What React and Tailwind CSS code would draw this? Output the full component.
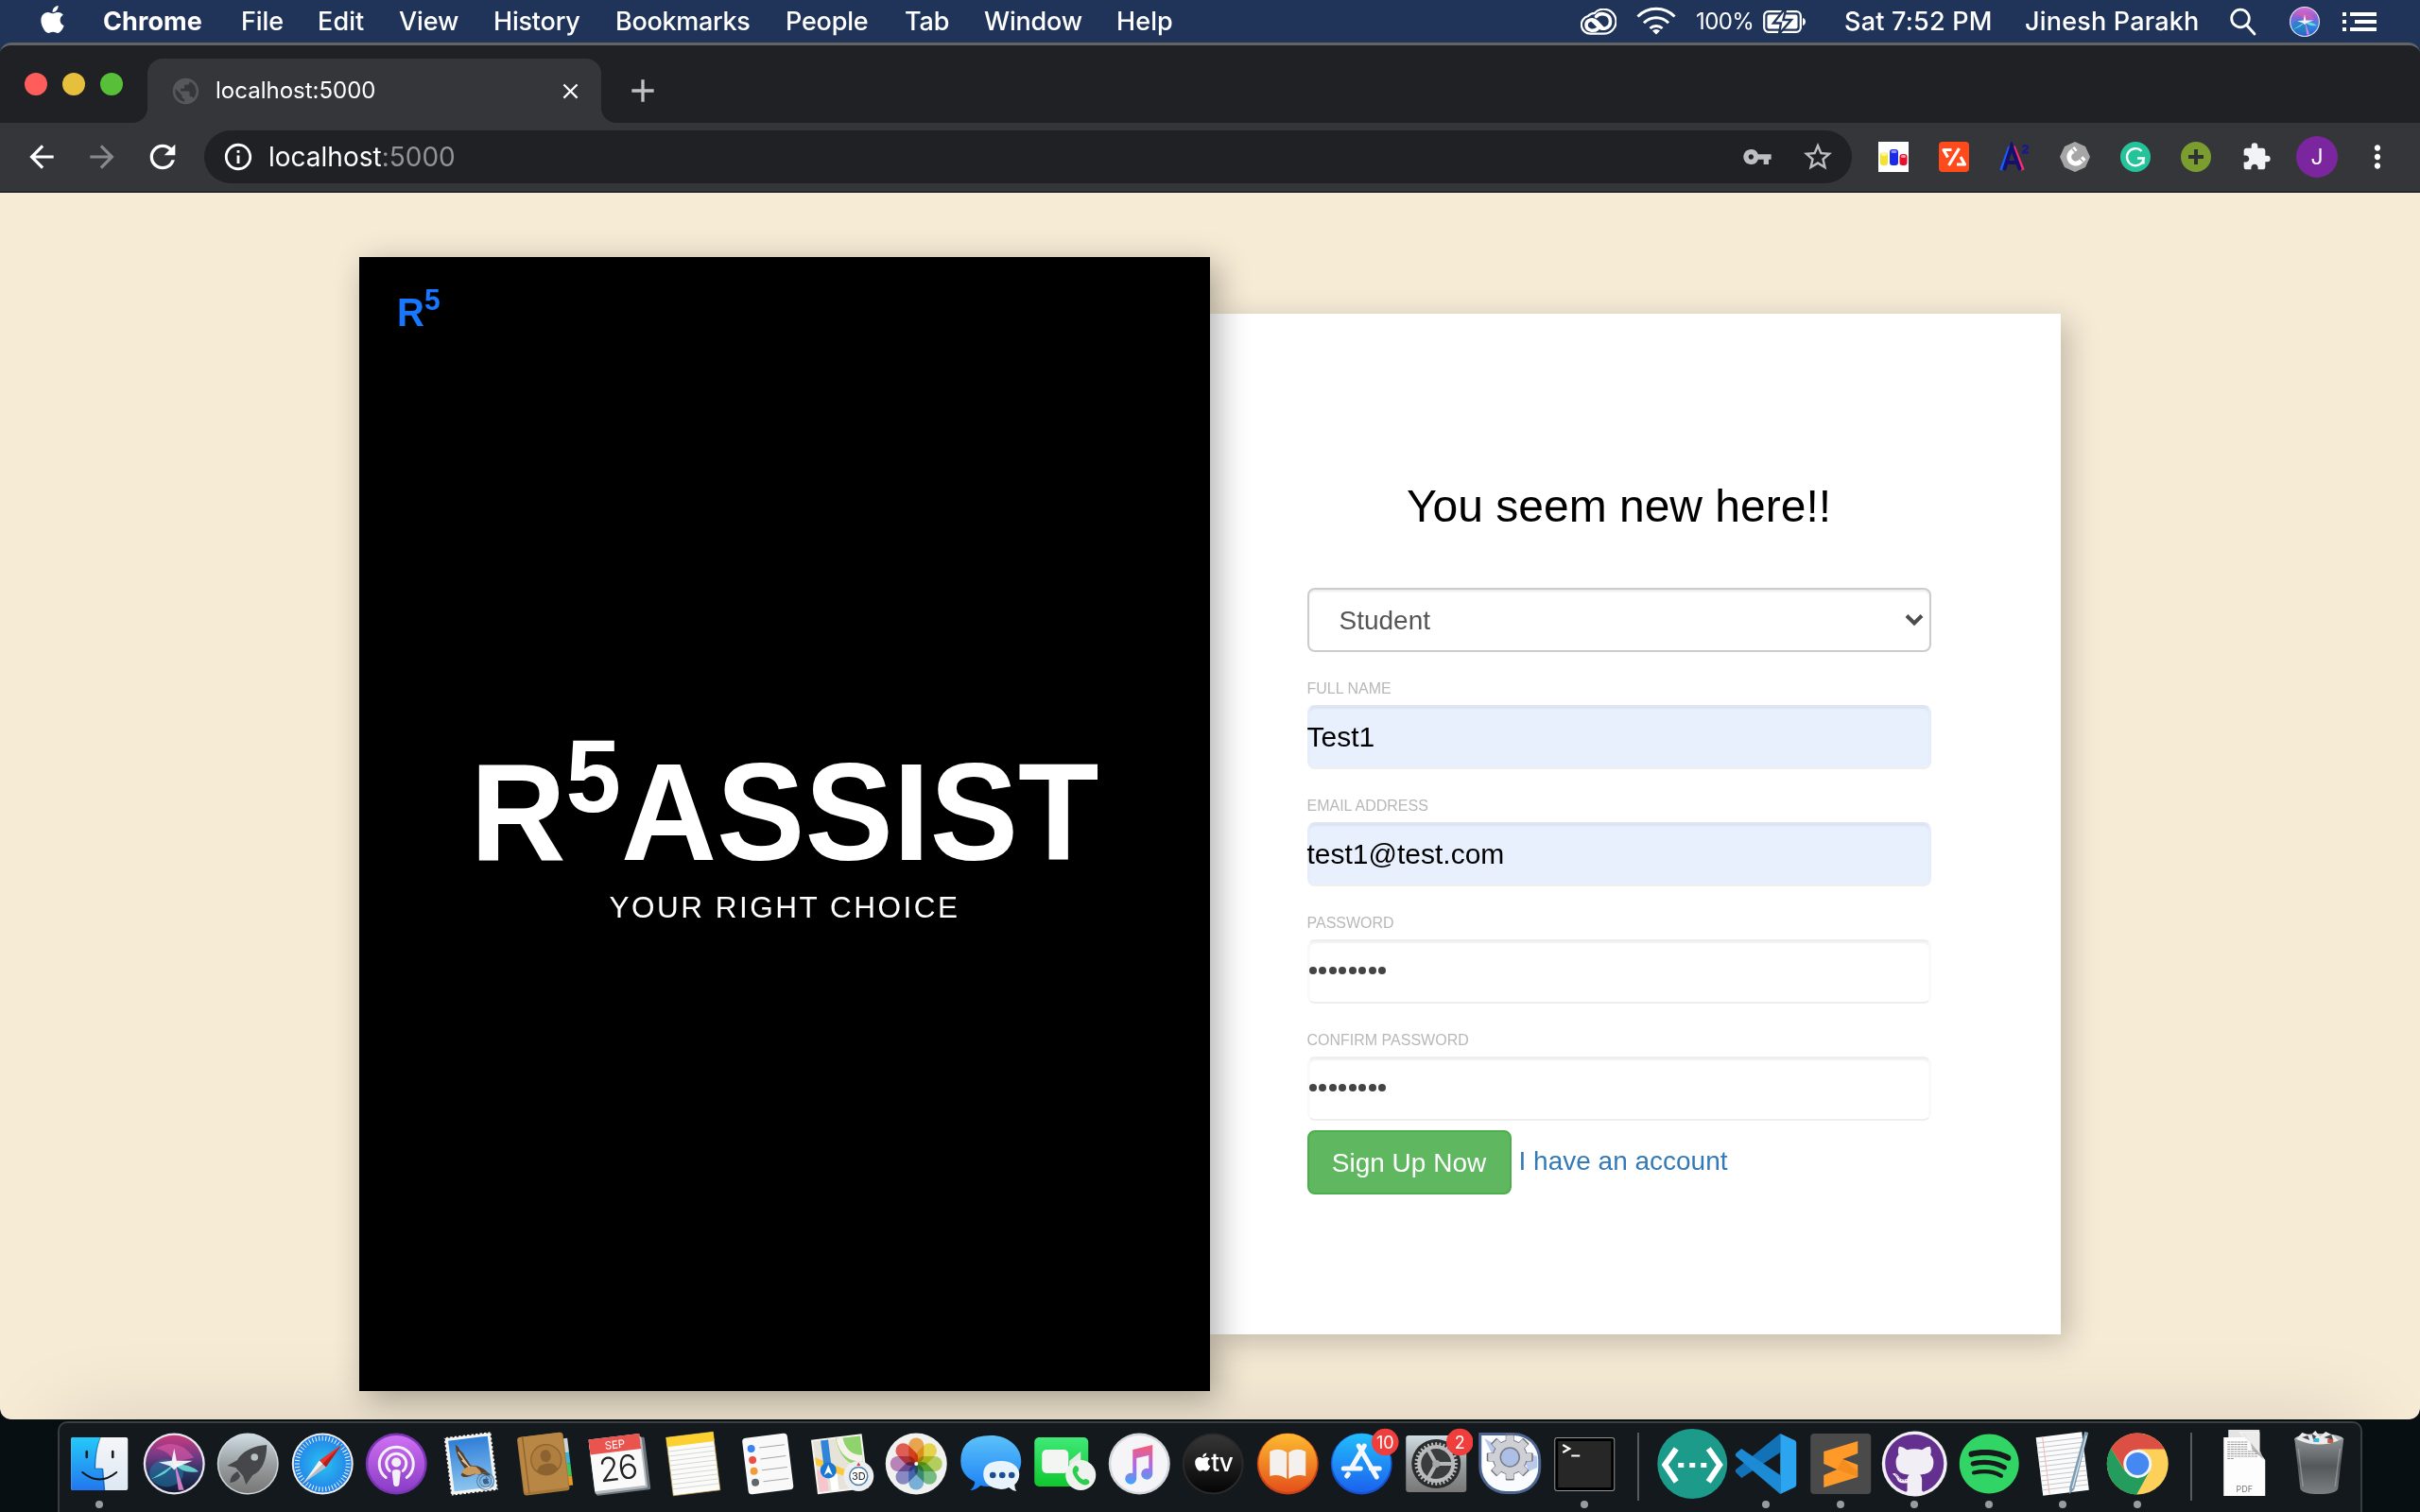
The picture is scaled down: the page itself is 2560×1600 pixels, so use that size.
import React from "react";
import {
  MdArrowBack, MdArrowForward, MdRefresh, MdInfoOutline, MdVpnKey, MdStarBorder,
  MdExtension, MdMoreVert, MdClose, MdAdd, MdPublic,
} from "react-icons/md";
import { FaApple, FaGithub, FaSpotify } from "react-icons/fa";

const menus = [
  ["Chrome", "w-[146px] font-bold tracking-[0.1px]"],
  ["File", "w-[81px] font-medium tracking-[-0.1px]"],
  ["Edit", "w-[86px] font-medium tracking-[0.1px]"],
  ["View", "w-[100px] font-medium tracking-[-0.1px]"],
  ["History", "w-[129px] font-medium tracking-[-0.2px]"],
  ["Bookmarks", "w-[180px] font-medium tracking-[-0.3px]"],
  ["People", "w-[126px] font-medium tracking-[-0.2px]"],
  ["Tab", "w-[84px] font-medium tracking-[-0.1px]"],
  ["Window", "w-[140px] font-medium tracking-[-0.2px]"],
  ["Help", "w-[80px] font-medium tracking-[0.1px]"],
];

function CreativeCloud() {
  return (
    <svg viewBox="0 0 38 28" className="h-7 w-[38px]" fill="none" stroke="#fff" strokeLinecap="round">
      <path d="M10.500 26.700a9.500 9.500 0 0 1-2.500-18.700A9.500 9.500 0 0 1 15 4.800 13 13 0 1 1 25 26.700z" strokeWidth="2.200" />
      <path d="M18 21.500c-4.500 3.500-12 1.500-12-4s7-7.500 11-3.500l6.500 7" strokeWidth="3.600" />
      <path d="M16.500 8.500c4.500-5 15-3 15 5s-8.500 10-13 5l-6-6" strokeWidth="3.600" />
    </svg>
  );
}

function Wifi() {
  return (
    <svg viewBox="0 0 42 30" className="h-[30px] w-[42px]" fill="none" stroke="#fff" strokeWidth="3">
      <path d="M1.500 10.500a27 27 0 0 1 39 0M8 17.200a18 18 0 0 1 26 0M14.500 23a9.500 9.500 0 0 1 13 0" />
      <path d="M21 29.500l-4-4a6 6 0 0 1 8 0z" fill="#fff" stroke="none" />
    </svg>
  );
}

function Battery() {
  return (
    <svg viewBox="0 0 46 26" className="h-[26px] w-[46px]">
      <rect x="1.200" y="2.200" width="38.600" height="21.600" rx="4.500" fill="none" stroke="#fff" strokeWidth="2.200" />
      <rect x="4.500" y="5.500" width="32" height="15" rx="2" fill="#fff" />
      <path d="M42 9v8c4-1 4-7 0-8z" fill="#fff" />
      <path d="M22.500 0L11 14.500h8L17 26l13-15h-8.500L24 0z" fill="#fff" stroke="#203459" strokeWidth="2.400" />
    </svg>
  );
}

function SiriMark({ r = 16, fill = "url(#siri)" }) {
  return (
    <g>
      <circle r={r} fill="#e9e6ee" />
      <circle r={r * 0.93} fill={fill} />
      <ellipse cx={-r * 0.25} cy={r * 0.3} rx={r * 0.55} ry={r * 0.45} fill="#1f7fb0" opacity=".5" />
      <path d={`M${-r * 0.6} ${-r * 0.5}Q${r * 0.1} ${-r * 0.9} ${r * 0.65} ${-r * 0.2}Q${r * 0.1} ${-r * 0.1} 0 0Q${-r * 0.1} ${-r * 0.4} ${-r * 0.6} ${-r * 0.5}`} fill="#e25aa8" opacity=".6" />
      <path d={`M${-r * 0.75} ${r * 0.5}Q${-r * 0.1} ${r * 0.1} 0 0Q${r * 0.5} 0 ${r * 0.8} ${r * 0.25}Q${r * 0.3} ${r * 0.35} 0 0Q${-r * 0.2} ${r * 0.35} ${-r * 0.75} ${r * 0.5}`} fill="#6fe9dc" opacity=".85" />
      <path d={`M0 ${-r * 0.1}L${r * 0.32} ${r * 0.85}L${r * 0.14} ${r * 0.85}Z`} fill="#f08ad8" opacity=".85" />
      <path d={`M0 ${-r * 0.5}L${r * 0.08} ${-r * 0.1}L${r * 0.6} ${-r * 0.1}L${r * 0.1} ${r * 0.1}L0 ${r * 0.2}L${-r * 0.12} ${r * 0.08}L${-r * 0.5} ${-r * 0.05}L${-r * 0.08} ${-r * 0.1}Z`} fill="#fff" opacity=".9" />
    </g>
  );
}

function MenuBar() {
  return (
    <header className="flex h-[45px] items-center bg-[#203459] text-[27px] leading-none text-white">
      <div className="w-[109px] pb-1 pl-[39px]"><FaApple size={33} /></div>
      <nav className="flex flex-1 whitespace-nowrap">
        {menus.map(([m, c]) => <span key={m} className={c}>{m}</span>)}
      </nav>
      <div className="flex items-center whitespace-nowrap">
        <div className="w-[59px]"><CreativeCloud /></div>
        <div className="w-[63px] pb-0.5"><Wifi /></div>
        <span className="w-[71px] text-[24px] tracking-[-0.6px]">100%</span>
        <div className="w-[86px]"><Battery /></div>
        <span className="w-[191px] font-medium tracking-[0.2px]">Sat 7:52 PM</span>
        <span className="w-[217px] font-medium tracking-[0.2px]">Jinesh Parakh</span>
        <svg viewBox="0 0 28 30" className="mr-[35px] h-[30px] w-7" fill="none" stroke="#fff" strokeWidth="2.800">
          <circle cx="11" cy="11.500" r="9.300" /><path d="M17.500 18.500L26 28" strokeLinecap="round" />
        </svg>
        <svg viewBox="-16 -16 32 32" className="mr-6 size-8"><SiriMark r={16} fill="url(#siriBright)" /></svg>
        <svg viewBox="0 0 36 20" className="mr-[46px] h-5 w-9" fill="#fff">
          <path d="M0 0h4v4H0zM0 8h4v4H0zM0 16h4v4H0zM8 0h28v4H8zM13 8h23v4H13zM8 16h28v4H8z" />
        </svg>
      </div>
    </header>
  );
}

function TabStrip() {
  return (
    <div className="flex h-[82px] items-end bg-[#202124]">
      <div className="flex w-[140px] gap-4 pb-[29px] pl-[26px]">
        <i className="size-6 rounded-full bg-[#ff5d5b]" />
        <i className="size-6 rounded-full bg-[#e6bf3c]" />
        <i className="size-6 rounded-full bg-[#57c038]" />
      </div>
      <div className="flex items-end">
        <div className="size-4 bg-[#35363a]"><div className="size-4 rounded-br-2xl bg-[#202124]" /></div>
        <div className="flex h-[68px] w-[480px] items-center rounded-t-2xl bg-[#35363a] pl-6 pr-[19px] text-[24px] text-white">
          <MdPublic size={33} className="text-[#54575b]" />
          <span className="ml-[15px] flex-1 tracking-[0px]">localhost:5000</span>
          <MdClose size={27} />
        </div>
        <div className="size-4 bg-[#35363a]"><div className="size-4 rounded-bl-2xl bg-[#202124]" /></div>
      </div>
      <MdAdd size={40} className="mb-[14px] ml-[8px] text-[#bdc1c6]" />
    </div>
  );
}

function Extensions() {
  return (
    <div className="flex items-center gap-8">
      <svg viewBox="0 0 32 32" className="size-8">
        <path d="M0 0h32v32H0z" fill="#fff" />
        <rect x="2" y="11" width="8" height="14" rx="3" fill="#f4e32c" /><rect x="3" y="11" width="6" height="4" rx="2" fill="#fff8a0" />
        <rect x="12" y="8" width="9" height="17" rx="3" fill="#1a2be8" /><rect x="13.500" y="9" width="6" height="3" rx="1.500" fill="#8a93ff" />
        <rect x="22.500" y="13" width="8" height="12" rx="3" fill="#e8112d" /><rect x="24" y="14" width="5" height="3" rx="1.500" fill="#ff9aa5" />
      </svg>
      <svg viewBox="0 0 32 32" className="size-8">
        <rect width="32" height="32" rx="4" fill="#ff4a1c" />
        <path d="M13.500 8.500H5l4.500 8M21.500 7L10.500 25M19 24h8.500L23 16" fill="none" stroke="#fff" strokeWidth="3.200" strokeLinejoin="round" />
      </svg>
      <svg viewBox="0 0 32 32" className="size-8" fill="none">
        <path d="M2 30L11 5" stroke="#1a5cff" strokeWidth="3.500" />
        <path d="M15 5l10 25" stroke="#ff2d6f" strokeWidth="3.500" />
        <path d="M5 30L13 5 22 30M8 22h11" stroke="#14106b" strokeWidth="4" />
        <path d="M25 6c0-2.500 5-2.500 5 0 0 2-5 3-5 5.500h6" stroke="#1a1a8a" strokeWidth="2.400" />
      </svg>
      <svg viewBox="0 0 32 32" className="size-8">
        <path d="M16 0l11 5 5 11-5 11-11 5-11-5L0 16 5 5z" fill="#a6a6a6" strokeLinejoin="round" />
        <path d="M17 7l-5.500 4.500a7 7 0 0 0 9 10.500L26 17" fill="none" stroke="#fff" strokeWidth="5" />
        <path d="M13 7.500l4 4.500M20.500 17l4 4" stroke="#a6a6a6" strokeWidth="1.500" />
      </svg>
      <svg viewBox="0 0 32 32" className="size-8">
        <circle cx="16" cy="16" r="16" fill="#25c39a" />
        <path d="M22.500 10a9 9 0 1 0 2.400 7.500H18M24.500 17v6.500" fill="none" stroke="#fff" strokeWidth="2.300" />
      </svg>
      <svg viewBox="0 0 32 32" className="size-8">
        <circle cx="16" cy="16" r="16" fill="#7b9c2e" />
        <path d="M16 8v16M8 16h16" stroke="#2f3135" strokeWidth="4" />
      </svg>
      <MdExtension size={32} className="text-[#f1f3f4]" />
      <div className="-ml-[6px] flex size-11 items-center justify-center rounded-full bg-[#7b269f] text-[23px] text-white">J</div>
    </div>
  );
}

function Toolbar() {
  return (
    <div className="flex h-[74px] items-center border-b-2 border-[#26272a] bg-[#35363a] text-white">
      <MdArrowBack size={38} className="ml-[25px]" />
      <MdArrowForward size={38} className="ml-[26px] text-[#88898c]" />
      <MdRefresh size={40} className="ml-[25px]" />
      <div className="ml-[24px] flex h-14 w-[1743px] items-center rounded-full bg-[#202124] pl-[19px] text-[28px]">
        <MdInfoOutline size={34} />
        <span className="ml-[15px] flex-1 tracking-[0px]">localhost<span className="text-[#919395]">:5000</span></span>
        <MdVpnKey size={32} className="text-[#bdbebf]" />
        <MdStarBorder size={36} className="ml-[30px] mr-[18px] text-[#bdbebf]" />
      </div>
      <div className="ml-7"><Extensions /></div>
      <MdMoreVert size={38} className="ml-[23px]" />
    </div>
  );
}

const fieldBase = "flex h-[68px] items-center rounded-lg border-2 text-[30px] shadow-[inset_0_2px_2px_rgba(0,0,0,0.06)]";

function Field({ label, value, secret }) {
  return (
    <div>
      <div className="flex h-14 items-end pb-[8px] text-[16px] leading-[18px] tracking-[0px] text-[#b8b8b8]">{label}</div>
      {secret ? (
        <div className={fieldBase + " gap-[2.500px] border-x-[#f9f9f9] border-y-[#eee] bg-white pb-[3px]"}>
          {Array.from({ length: 8 }, (_, i) => <i key={i} className="size-2 rounded-full bg-[#444]" />)}
        </div>
      ) : (
        <div className={fieldBase + " border-[#e6eefb] border-b-[#eee] border-t-[#dfe6f2] bg-[#e8f0fe] pb-[2px] text-black"}>
          <span className="-ml-[2px]">{value}</span>
        </div>
      )}
    </div>
  );
}

function Page() {
  return (
    <main className="flex h-[1298px] items-start rounded-b-[10px] bg-[#f6ebd5] pl-[380px] pt-[68px] font-['Liberation_Sans',Arial,sans-serif]">
      <section className="relative flex h-[1200px] w-[900px] flex-col items-center bg-black text-white shadow-[8px_8px_32px_rgba(0,0,0,0.32)]">
        <div className="flex h-[520px] w-full origin-[0_72px] scale-y-[1.05] items-start pl-10 pt-[30px] text-[40px] font-bold leading-[58px] text-[#1877ff]">
          R<span className="-mt-[12px] text-[30px]">5</span>
        </div>
        <div className="flex h-[140px] origin-[50%_118px] scale-y-[1.05] items-start text-[140px] font-bold leading-[140px]">
          R<span className="-mt-[37px] text-[105px]">5</span>ASSIST
        </div>
        <div className="mt-2 text-[31.500px] leading-[40px] tracking-[2.500px]">YOUR RIGHT CHOICE</div>
      </section>
      <section className="mt-[60px] h-[1080px] w-[900px] bg-white pl-[102.500px] pt-[178px] shadow-[8px_8px_30px_rgba(0,0,0,0.22)]">
        <div className="w-[660px]">
          <h1 className="h-[112px] pt-px text-center text-[48px] leading-[50px] text-black">You seem new here!!</h1>
          <div className="flex h-[68px] items-center justify-between rounded-lg border-2 border-[#ccc] bg-white pl-8 pr-[6px] text-[28px] text-[#555] shadow-[inset_0_2px_2px_rgba(0,0,0,0.075)]">
            <span className="pt-px">Student</span>
            <svg viewBox="0 0 20 14" className="h-[14px] w-5" fill="none" stroke="#4c4c4c" strokeWidth="4"><path d="M2 2.500l8 8 8-8" /></svg>
          </div>
          <Field label="FULL NAME" value="Test1" />
          <Field label="EMAIL ADDRESS" value="test1@test.com" />
          <Field label="PASSWORD" secret />
          <Field label="CONFIRM PASSWORD" secret />
          <div className="mt-[10px] flex items-center gap-[8px] text-[28px]">
            <button className="h-[68px] w-[216px] rounded-lg border-2 border-[#4cae4c] bg-[#5fb760] pt-px text-white">Sign Up Now</button>
            <a className="pb-[2px] text-[#337ab7]">I have an account</a>
          </div>
        </div>
      </section>
    </main>
  );
}

/* Dock artwork: every icon is drawn around the origin. */
const petals = ["#f5a13a", "#f0dc35", "#b5d34b", "#67bd77", "#6aaede", "#7f7fc6", "#b978b8", "#e8493f"];
const ticks = Array.from({ length: 48 }, (_, i) => i * 7.5);

function Gear({ teeth, r, h, w, fill }) {
  return (
    <g fill={fill}>
      <circle r={r} />
      {Array.from({ length: teeth }, (_, i) => (
        <rect key={i} x={-w / 2} y={-r - h} width={w} height={h + 4} rx="1" transform={`rotate(${(360 / teeth) * i})`} />
      ))}
    </g>
  );
}

function AppBadge({ n }) {
  return (
    <g>
      <circle cx="25" cy="-23" r="14.300" fill="#f03e3d" />
      <text x="25" y="-16.500" textAnchor="middle" fontSize="18" fill="#fff">{n}</text>
    </g>
  );
}

const art = {
  finder: (
    <g>
      <rect x="-30" y="-28" width="60" height="56" rx="2" fill="url(#finderR)" />
      <path d="M1-28h-29a2 2 0 0 0-2 2v52a2 2 0 0 0 2 2H6Q5 17 4 5h-8Q-4-14 1-28z" fill="url(#finderL)" />
      <path d="M1-28Q-5-14-5 5h8q1 12 2 23" fill="none" stroke="#143a66" strokeWidth="1" opacity=".5" />
      <path d="M-13.500-13v6M14-13v6" stroke="#1a1a1a" strokeWidth="2.600" strokeLinecap="round" />
      <path d="M-18 9q18 15 36 0" fill="none" stroke="#151515" strokeWidth="2" strokeLinecap="round" />
    </g>
  ),
  siri: <SiriMark r={32.500} />,
  launch: (
    <g>
      <circle r="32.500" fill="#cfd8dd" /><circle r="31" fill="url(#steel)" />
      <path d="M20-20C4-19-7-12-11-4l-11 6 9 2 8 9 3 9 7-10C15 8 20-5 20-20z" fill="#45474a" />
      <circle cx="7" cy="-7" r="3.800" fill="#b7c0c5" />
      <path d="M-11 8q-8 4-8 12 8-1 11-7z" fill="#45474a" />
    </g>
  ),
  safari: (
    <g>
      <circle r="32.500" fill="#eee" /><circle r="30.500" fill="url(#safari)" />
      {ticks.map((a) => <path key={a} d="M0-29.500v5" stroke="#fff" strokeWidth=".9" transform={`rotate(${a})`} />)}
      <path d="M20-20L-3.500-3.500 3.500 3.500z" fill="#e8362f" /><path d="M-20 20L-3.500-3.500 3.500 3.500z" fill="#f2f2f2" />
      <path d="M-20 20L0 0l3.500 3.500z" fill="#b9bcc0" /><path d="M20-20L0 0l3.500 3.500z" fill="#b51d1d" />
    </g>
  ),
  podcasts: (
    <g>
      <circle r="32.500" fill="#7a35b5" /><circle r="30" fill="url(#pod)" />
      <path d="M-11 14.500a18 18 0 1 1 22 0M-7 7.500a10.500 10.500 0 1 1 14 0" fill="none" stroke="#f4f0f8" strokeWidth="3" strokeLinecap="round" />
      <circle cy="-1.500" r="5" fill="#f4f0f8" /><path d="M-4.500 9q0-3 4.500-3t4.500 3l-1.500 13q-.5 2-3 2t-3-2z" fill="#f4f0f8" />
    </g>
  ),
  mail: (
    <g transform="rotate(-7)">
      <rect x="-25" y="-31" width="50" height="62" fill="#f3f3f0" />
      <rect x="-25" y="-31" width="50" height="62" fill="none" stroke="#12181c" strokeWidth="2" strokeDasharray="2 2.500" />
      <rect x="-21" y="-27" width="42" height="54" fill="url(#sky)" />
      <path d="M-14-22q3 2 4 6 4 4 5 9 3 4 4 8 3 2 7 2 9 4 13 12-6-1-8-3-3 2-7-1l-7 2q-8 1-9-3 2-3 6-4-9-13-8-28z" fill="#5a4028" />
      <path d="M-11 7q7-7 16-3 4 4 5 8-4 1-7-1l-6 1q-6-1-8-5z" fill="#c79a5f" /><path d="M-12-14l9 16M-9-5l7 8" stroke="#d9c6a4" strokeWidth="1.500" />
      <circle cx="13" cy="20" r="9" fill="none" stroke="#4c6b8c" strokeWidth="1" opacity=".8" />
      <circle cx="13" cy="20" r="6" fill="none" stroke="#4c6b8c" strokeWidth="1" opacity=".8" />
      <FaApple x="9" y="15" size="9" color="#3f5f82" />
    </g>
  ),
  contacts: (
    <g transform="translate(-1 0) rotate(-7)">
      <path d="M22-24h6v15h-6z" fill="#cdd5d8" /><path d="M22-9h6V3h-6z" fill="#3fb3d6" /><path d="M22 3h6v13h-6z" fill="#43c35c" /><path d="M22 16h6v10h-6z" fill="#e59a26" />
      <rect x="-25" y="-31" width="49" height="62" rx="3" fill="#a67738" /><rect x="-24" y="-31" width="47" height="59" rx="3" fill="#b88746" />
      <path d="M-19-31v61" stroke="#94662c" strokeWidth="1.500" />
      <circle cx="3" cy="-4" r="16" fill="#b07e3e" stroke="#8f642f" strokeWidth="1.400" />
      <ellipse cx="3" cy="-8" rx="5.500" ry="6.500" fill="#8c6230" /><path d="M-8 7q2-7 11-7t11 7q-5 5-11 5t-11-5z" fill="#8c6230" />
    </g>
  ),
  calendar: (
    <g transform="translate(-1.500 -1) rotate(-7)">
      <rect x="-27" y="-24" width="58" height="56" rx="2" fill="#6e777c" /><rect x="-28" y="-25" width="56" height="55" rx="2" fill="#b5bbbf" />
      <rect x="-28" y="-28" width="54" height="55" fill="#fafafa" /><rect x="-28" y="-28" width="54" height="16" fill="#e9544f" />
      <text x="-1" y="-15.500" textAnchor="middle" fontSize="11.500" fill="#fff">SEP</text>
      <text x="-1" y="18" textAnchor="middle" fontSize="35" fill="#222" letterSpacing="-1.500" fontWeight="300">26</text>
    </g>
  ),
  notes: (
    <g transform="rotate(-7)">
      <rect x="-25" y="-31" width="50" height="62" fill="#fbfbf9" stroke="#c6a24a" strokeWidth=".7" />
      <rect x="-25" y="-31" width="50" height="10" fill="#fcd02f" />
      {Array.from({ length: 9 }, (_, i) => <path key={i} d={`M-25 ${-16 + i * 5}h50`} stroke="#cfcfcf" strokeWidth=".8" />)}
    </g>
  ),
  reminders: (
    <g transform="rotate(-7)">
      <rect x="-24" y="-30" width="48" height="60" rx="4" fill="#f9f9fa" />
      {["#3b82f2", "#ec5045", "#f39b38", "#5f656d"].map((c, i) => (
        <g key={c}><circle cx="-15.500" cy={-18 + i * 12} r="4" fill={c} /><path d={`M-7 ${-18 + i * 12}h27`} stroke="#a5a7aa" strokeWidth="1" /></g>
      ))}
    </g>
  ),
  maps: (
    <g>
      <g transform="rotate(-7)">
        <rect x="-29" y="-29" width="54" height="58" fill="#f7f5ef" /><rect x="-27" y="-27" width="50" height="54" fill="#e8e3d8" />
        <path d="M-3-27h26V5Q0 3-3-27z" fill="#8fd36d" /><path d="M1-27q2 22 22 24" fill="none" stroke="#f5f2ea" strokeWidth="7" />
        <path d="M-27-10l22 12L23 18v6l-30-15-20-11z" fill="#fdc93c" /><path d="M-27 3l10 5v19h-10z" fill="#f6c6cf" />
        <path d="M-19-27h8v34h-8z" fill="#2f86d8" /><path d="M-14 10h8v17h-8z" fill="#fff" />
      </g>
      <circle cx="-14" cy="7" r="8.500" fill="#1a77d3" /><path d="M-14 1l4.500 11-4.500-3-4.500 3z" fill="#fff" />
      <circle cx="18" cy="13" r="16" fill="#eceff1" /><circle cx="18" cy="13" r="9.500" fill="#fff" stroke="#4b7ea3" strokeWidth="1.500" />
      <text x="18" y="17" textAnchor="middle" fontSize="11" fill="#222">3D</text><path d="M18-1.500l2 3.500h-4z" fill="#e33" />
    </g>
  ),
  photos: (
    <g>
      <circle r="32.500" fill="#f1f1f0" />
      {petals.map((c, i) => <rect key={c} x="-8" y="-27.500" width="16" height="27" rx="8" fill={c} opacity=".86" style={{ mixBlendMode: "multiply" }} transform={`rotate(${i * 45})`} />)}
      <circle r="2" fill="#fff" />
    </g>
  ),
  messages: (
    <g>
      <path d="M0-30c18 0 32 12 32 27S18 24-2 24q-6 0-9-1-5 5-11 5 5-4 5-9-15-7-15-22 0-27 32-27z" fill="url(#msg)" />
      <path d="M11-3c11 0 19 6 19 14q0 7-5 11 0 4 2 7-5-1-8-4-4 2-8 2-19-2-19-16T11-3z" fill="#e9f3fb" />
      <g fill="#1c4f8f"><circle cx="2" cy="12" r="3.300" /><circle cx="12" cy="12" r="3.300" /><circle cx="22" cy="12" r="3.300" /></g>
    </g>
  ),
  facetime: (
    <g>
      <rect x="-32" y="-28" width="57" height="52" rx="5" fill="url(#ft)" />
      <rect x="-24" y="-15" width="28" height="25" rx="5" fill="#f3f5f3" /><path d="M5-3L17-13V10H5z" fill="#e4ebe5" />
      <circle cx="17" cy="12" r="16" fill="#f0f2ef" />
      <path d="M10 3q3-3 5 2 0 3-2 4 2 6 7 8 2-2 5 0 3 3-1 5-6 2-12-6T10 3z" fill="#2bcf4c" />
    </g>
  ),
  music: (
    <g>
      <circle r="32.500" fill="#d3d7dd" /><circle r="30" fill="#f5f5f8" />
      <path d="M-7-15L14-20v31a6 6 0 1 1-4-6V-9L-3-6v22a6 6 0 1 1-4-6z" fill="url(#music)" />
    </g>
  ),
  tv: (
    <g>
      <circle r="32.500" fill="#2a2a2b" /><circle r="30.500" fill="url(#tv)" />
      <FaApple x="-22" y="-13" size="22" color="#fff" />
      <text x="-2" y="8" fontSize="26" fontWeight="500" fill="#fff" letterSpacing="-1">tv</text>
    </g>
  ),
  books: (
    <g>
      <circle r="32.500" fill="#c94316" /><circle r="31" cy="-1" fill="url(#books)" />
      <path d="M-1-12q-8-6-18-1v26q10-3 18 3zM1-12q8-6 18-1v26q-10-3-18 3z" fill="#f3f0ee" />
    </g>
  ),
  appstore: (
    <g>
      <circle r="32.500" fill="#1652d2" /><circle r="31" cy="-1" fill="url(#store)" />
      <g stroke="#f4f8fc" strokeWidth="5" strokeLinecap="round" fill="none"><path d="M3-19L-11 5M-3-19L16 14M-19 5H-1M10 5h9M-14 11l-1.500 2" /></g>
      <AppBadge n="10" />
    </g>
  ),
  settings: (
    <g>
      <rect x="-32" y="-30" width="64" height="60" rx="3" fill="url(#steel)" />
      <circle r="26" fill="#2b2c2e" />
      <Gear teeth={32} r={20} h={3} w={2} fill="#b9bbbd" /><circle r="16" fill="#3b3c3e" />
      <g stroke="#b4b6b8" strokeWidth="4"><path d="M0 0L17 0M0 0L-9-16M0 0L-9 16" /></g><circle r="4" fill="#a5a7a9" />
      <AppBadge n="2" />
    </g>
  ),
  config: (
    <g>
      <path d="M-33-33H4A29 29 0 0 1 33-4V4A28 28 0 0 1 5 32H-4A29 29 0 0 1-33 3z" fill="#4a648f" />
      <path d="M-30-30H4A26 26 0 0 1 30-4V4A25 25 0 0 1 5 29H-4A26 26 0 0 1-30 3z" fill="#fafbfe" />
      <path d="M-29-26L-6-6-24 18A26 26 0 0 1-29 3z" fill="#fff" /><path d="M-27-27L-8-16-14 0zM12-12l17 4V4l-9 4z" fill="#b9c9ea" />
      <g transform="translate(0 -7)"><Gear teeth={8} r={18.500} h={6} w={9} fill="#70727c" /><Gear teeth={8} r={17.500} h={5.500} w={8} fill="#cfd0d6" /><circle r="10" fill="#aebfe6" stroke="#777b88" strokeWidth="1.500" /></g>
    </g>
  ),
  terminal: (
    <g>
      <rect x="-32" y="-28" width="64" height="57" rx="3" fill="#8f9496" /><rect x="-31" y="-27" width="62" height="55" rx="2" fill="#000" />
      <rect x="-28" y="-24" width="56" height="49" fill="#272727" />
      <path d="M-23-20l7 4-7 4" stroke="#fff" strokeWidth="2.200" fill="none" /><path d="M-14-8.500h9" stroke="#fff" strokeWidth="2" />
    </g>
  ),
  brackets: (
    <g>
      <circle r="37" fill="#1c9b8b" />
      <path d="M-17-16L-29 1l12 18M17-16L29 1 17 19" fill="none" stroke="#fff" strokeWidth="6" />
      <path d="M-15-1h6v5h-6zM-3-1h6v5h-6zM9-1h6v5H9z" fill="#fff" />
    </g>
  ),
  vscode: (
    <g>
      <path d="M15-32v20L-26 15l-6-6q-1-1 0-3z" fill="#1272b8" />
      <path d="M-26-16l-6 5q-1 2 0 3L15 32V12z" fill="#1c8ad4" />
      <path d="M15-32l15 7q2 1 2 3v44q0 2-2 3l-15 7z" fill="#2ba5f0" />
    </g>
  ),
  sublime: (
    <g>
      <rect x="-32" y="-32" width="64" height="64" rx="4" fill="#4a4a4a" />
      <path d="M-18-13L18-24v13L2-5l16 6V14L-18 25V12L-4 6l-14-6z" fill="#ff9a28" /><path d="M-4 6L18 14V8L2-5z" fill="#e58013" opacity=".5" />
    </g>
  ),
  github: <g><circle r="34.500" fill="#f2eef5" /><FaGithub x="-32" y="-32" size="64" color="#63308f" /></g>,
  spotify: <g><circle r="31" fill="#161a1a" /><FaSpotify x="-32.500" y="-32.500" size="65" color="#30d566" /></g>,
  textedit: (
    <g>
      <g transform="rotate(-7)">
        <rect x="-25" y="-31" width="49" height="62" fill="#fbfbfb" />
        {Array.from({ length: 11 }, (_, i) => <path key={i} d={`M-25 ${-25 + i * 5}h49`} stroke="#bfc3c8" strokeWidth=".9" />)}
        <path d="M-18-31v62" stroke="#f3b6b6" strokeWidth="1" />
      </g>
      <path d="M23-34l4 1L12 27l-5 5 0-7z" fill="#7f9bb0" /><path d="M25-30L10 26" stroke="#d9e8f2" strokeWidth="1.200" />
    </g>
  ),
  chrome: (
    <g>
      <circle r="32.500" fill="#fdd05a" />
      <path d="M-28.100-16.200A32.500 32.500 0 0 1 28.500-15.500H0L-13.500 7z" fill="#dc4f44" />
      <path d="M-28.100-16.200L-13.500 7.500 0 15.500 12.500 8-1 32.500A32.500 32.500 0 0 1-28.100-16.200z" fill="#249c5d" />
      <circle r="15" fill="#f3f4f6" /><circle r="12" fill="#4688f1" />
    </g>
  ),
  pdf: (
    <g>
      <path d="M-17-36h33v8h-33z" fill="#e4e4e4" /><path d="M-22-28H16V-12l6 8v38h-44z" fill="#fdfdfd" />
      <path d="M-6-34H16V-9z" fill="#f3f3f3" /><path d="M-3-33L6-27l2 12 12 10-3-8z" fill="#b5b5b5" /><path d="M-2-33h18v22z" fill="#ececec" />
      <g stroke="#9a9a9a" strokeWidth="1">{[-23, -20.500, -18, -15.500, -13, -10.500, -8, -5.500].map((y) => <path key={y} d={`M-18 ${y}H${y > -7 ? -11 : y > -15 ? 14 : 3}`} strokeDasharray="3 .6" />)}</g>
      <text y="29.500" textAnchor="middle" fontSize="9" fill="#777">PDF</text>
    </g>
  ),
  trash: (
    <g>
      <ellipse cy="-26" rx="26" ry="6" fill="#b9bcbf" />
      <path d="M-24-26l6-7 9 3 5-5 5 6 6-5 8 4 6 6-8 5h-32z" fill="#ececec" />
      <path d="M-18-28l6-2 2 5zM-8-32l5 3-3 4zM5-28l8-3 2 6z" fill="#4a4c52" /><path d="M-6-27h6v4h-6z" fill="#3ab4d8" /><path d="M9-26h6v4H9z" fill="#c5593a" />
      <path d="M-26-27q26 13 52 0L20 26q-2 6-20 6t-20-6z" fill="url(#can)" />
      <path d="M-22-16L-17 24M22-16L17 24" stroke="#b1b5b8" strokeWidth="1.500" opacity=".5" />
    </g>
  ),
};

function Grad({ id, stops, radial }) {
  const kids = stops.map((c, i) => <stop key={i} offset={i / (stops.length - 1)} stopColor={c} />);
  return radial ? <radialGradient id={id}>{kids}</radialGradient> : <linearGradient id={id} x2="0" y2="1">{kids}</linearGradient>;
}

function Gradients() {
  return (
    <svg className="absolute size-0">
      <defs>
        <Grad id="siri" stops={["#c93a7c", "#7a3a86", "#27345f", "#131a35"]} />
        <Grad id="siriBright" stops={["#d86bd0", "#8a62d8", "#2f86e6", "#2b5fd0"]} />
        <Grad id="finderL" stops={["#25c9fa", "#2277ee"]} /><Grad id="finderR" stops={["#f5f6f8", "#dde8f4"]} />
        <Grad id="steel" stops={["#cfdde3", "#9a9fa1", "#777776"]} /><Grad id="safari" radial stops={["#29c3f2", "#2380e6"]} />
        <Grad id="pod" stops={["#cf70f2", "#8a3cc6"]} /><Grad id="sky" stops={["#2f7fd8", "#8cc4ee"]} />
        <Grad id="msg" stops={["#5cc2fa", "#1a80f5"]} /><Grad id="ft" stops={["#3fe977", "#0fc82e"]} />
        <Grad id="music" stops={["#fb5a72", "#b168e0", "#3ea6f8"]} /><Grad id="tv" stops={["#363637", "#050505"]} />
        <Grad id="books" stops={["#fdbb30", "#e5501b"]} /><Grad id="store" stops={["#22bdfb", "#1b62ee"]} />
        <Grad id="can" stops={["#8d9193", "#54585a", "#7b7f82"]} />
      </defs>
    </svg>
  );
}

const apps = ["finder", "siri", "launch", "safari", "podcasts", "mail", "contacts", "calendar", "notes", "reminders", "maps", "photos", "messages", "facetime", "music", "tv", "books", "appstore", "settings", "config", "terminal"];
const others = ["brackets", "vscode", "sublime", "github", "spotify", "textedit", "chrome"];
const running = new Set(["finder", "terminal", "vscode", "sublime", "github", "spotify", "textedit", "chrome"]);

function DockIcon({ name }) {
  return (
    <div className="flex w-[78.550px] shrink-0 flex-col items-center">
      <svg viewBox="-39.25 -43 78.5 82" className="h-[82px] w-[78.500px]">{art[name]}</svg>
      {running.has(name) && <i className="size-2 rounded-full bg-[#969ca1]" />}
    </div>
  );
}

function Dock() {
  return (
    <footer className="mx-auto mt-0.5 flex h-24 w-[2438px] rounded-t-[10px] border-2 border-b-0 border-[#3a3e43] bg-[#13191d] pl-[3px] shadow-[0_0_90px_rgba(0,0,0,0.13)]">
      {apps.map((n) => <DockIcon key={n} name={n} />)}
      <div className="ml-[17px] mr-[16px] mt-[10px] h-[72px] w-0.5 shrink-0 bg-[#565c61]" />
      {others.map((n) => <DockIcon key={n} name={n} />)}
      <div className="ml-[17px] mr-[16px] mt-[10px] h-[72px] w-0.5 shrink-0 bg-[#565c61]" />
      <DockIcon name="pdf" />
      <DockIcon name="trash" />
    </footer>
  );
}

export default function App() {
  return (
    <div className="h-[1600px] w-[2560px] overflow-hidden bg-[#0a1014] bg-[linear-gradient(#203459_0,#203459_60px,#05080b_61px,#091014_1600px)] font-['Inter',sans-serif]">
      <Gradients />
      <MenuBar />
      <div className="overflow-hidden rounded-[12px] border-t-[3px] border-[#636466] bg-[#202124]">
        <TabStrip />
        <Toolbar />
        <Page />
      </div>
      <Dock />
    </div>
  );
}
